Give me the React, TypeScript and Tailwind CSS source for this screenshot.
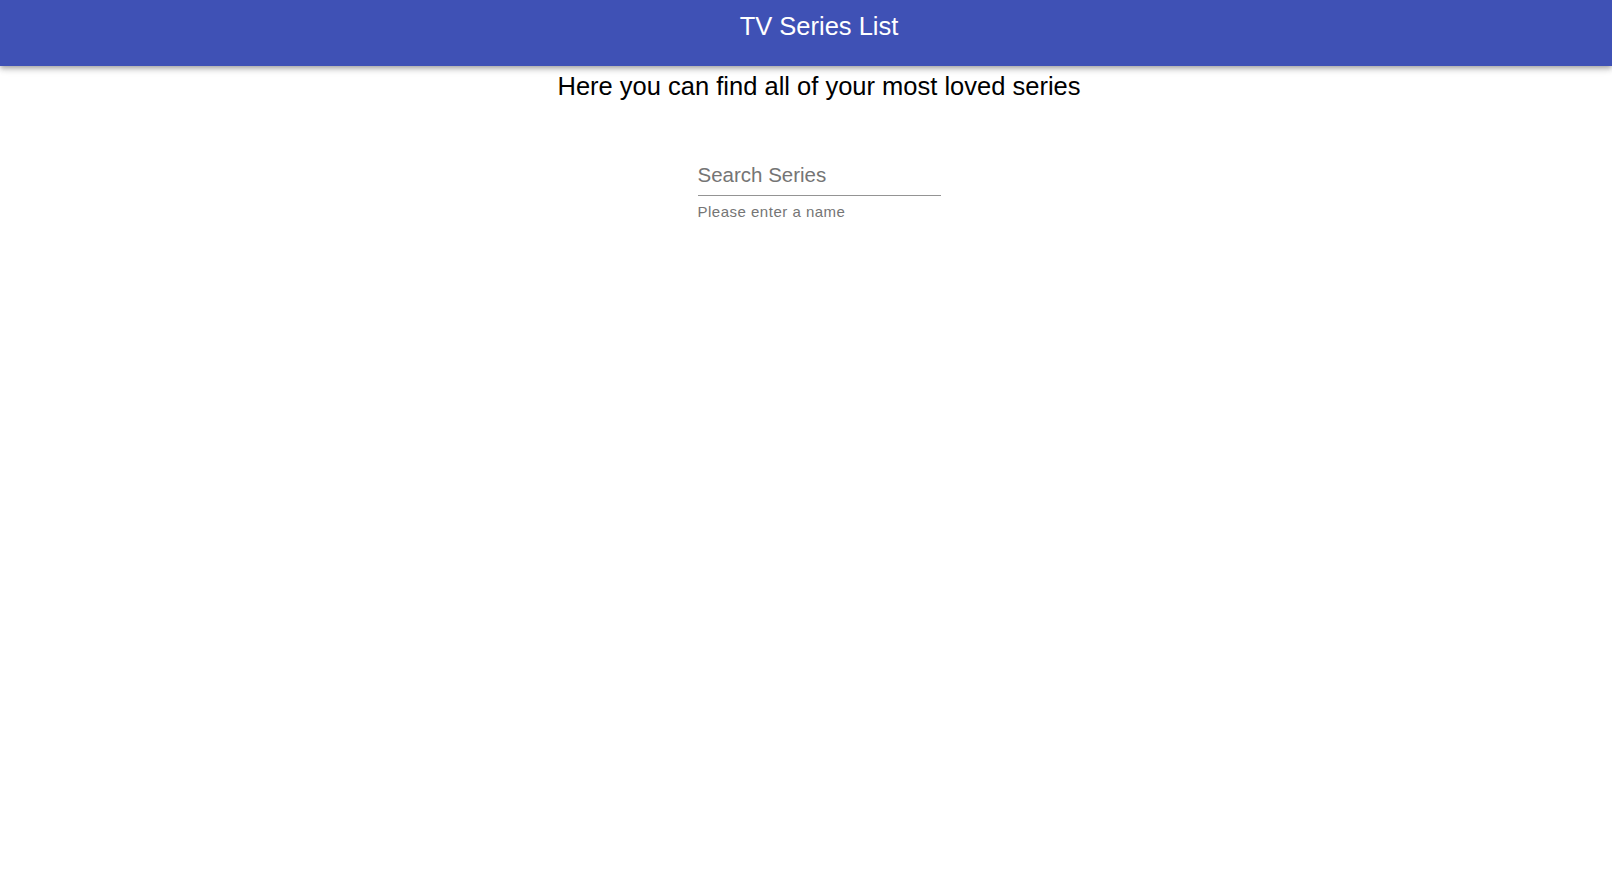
import { useState } from 'react'

export default function App() {
  const [query, setQuery] = useState('')

  return (
    <div className="min-h-screen bg-white font-['Liberation_Sans',Arial,sans-serif]">
      <header className="relative z-10 flex h-[66px] w-full justify-center bg-[#3f51b5] pt-[12px] pl-[26px] shadow-[0_2px_4px_-1px_rgba(0,0,0,0.2),0_4px_5px_0_rgba(0,0,0,0.14),0_1px_10px_0_rgba(0,0,0,0.12)]">
        <h1 className="text-[25.5px] leading-[29px] font-normal text-white">TV Series List</h1>
      </header>
      <main className="flex flex-col items-center pl-[26px]">
        <p className="mt-[6px] text-[25.5px] leading-[29px] text-black">
          Here you can find all of your most loved series
        </p>
        <div className="mt-[62px] flex w-[243px] flex-col">
          <input
            type="text"
            value={query}
            onChange={(e) => setQuery(e.target.value)}
            placeholder="Search Series"
            className="h-[33px] w-full border-b border-[#949494] bg-transparent pb-[9px] text-[20.5px] leading-[23px] text-[#222] outline-none placeholder:text-[#757575]"
          />
          <span className="mt-[7px] text-[15px] leading-[17px] tracking-[0.5px] text-[#757575]">
            Please enter a name
          </span>
        </div>
      </main>
    </div>
  )
}
